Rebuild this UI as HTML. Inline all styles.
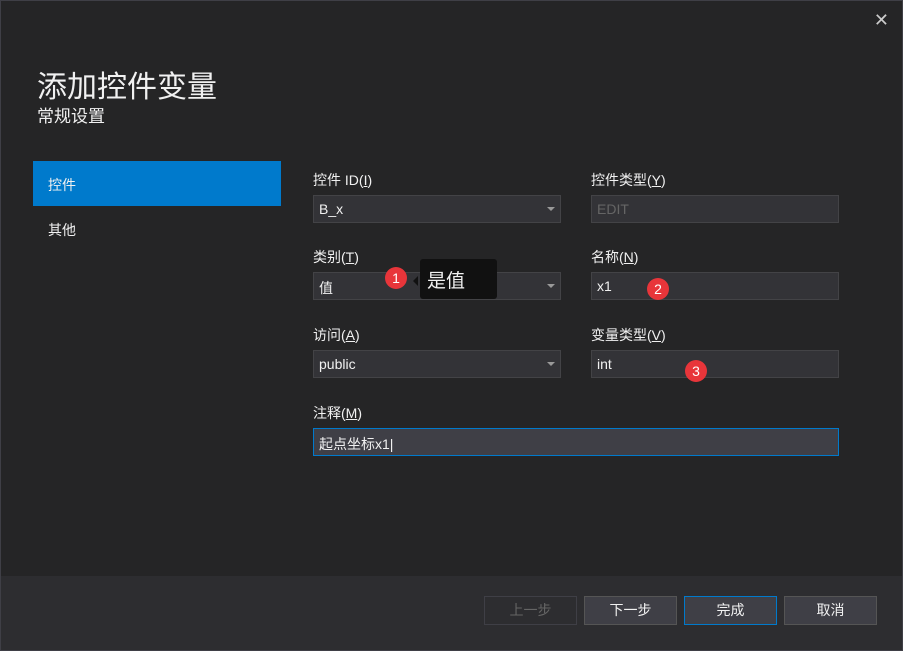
<!DOCTYPE html>
<html><head><meta charset="utf-8"><style>
*{margin:0;padding:0;box-sizing:border-box}
body{width:903px;height:651px;background:#252526;font-family:"Liberation Sans","Microsoft YaHei","Noto Sans CJK SC",sans-serif;color:#f1f1f1;position:relative;overflow:hidden}
.frame{position:absolute;left:0;top:0;width:903px;height:651px;border:1px solid #3f3f46}
.a{position:absolute}
.t1{left:37px;top:62px;font-size:30px;color:#f1f1f1}
.t2{left:37px;top:102px;font-size:17px}
.nav{left:33px;top:161px;width:248px;height:45px;background:#007acc;font-size:14px;padding:14px 0 0 15px}
.nav2{left:48px;top:220px;font-size:14px}
.lbl{font-size:14px;color:#f1f1f1}
.in{background:#333337;border:1px solid #434346;height:28px;font-size:14px;padding:5px 0 0 5px;color:#f1f1f1}
.dd::after{content:"";position:absolute;right:5px;top:11px;border:4px solid transparent;border-top:4px solid #999;border-bottom:0}
.dis{color:#656565}
.badge{width:22px;height:22px;border-radius:50%;background:#e8353a;color:#fff;font-size:14px;text-align:center;line-height:22px}
.foot{left:1px;top:576px;width:901px;height:74px;background:#2d2d30}
.btn{top:596px;width:93px;height:29px;background:#3f3f46;border:1px solid #555;font-size:14px;text-align:center;line-height:27px}
</style></head><body>
<div class="frame"></div>
<div class="a" style="right:14px;top:10px;font-size:18px;color:#ccc">✕</div>
<div class="a t1">添加控件变量</div>
<div class="a t2">常规设置</div>
<div class="a nav">控件</div>
<div class="a nav2">其他</div>

<div class="a lbl" style="left:313px;top:170px">控件 ID(<u>I</u>)</div>
<div class="a in dd" style="left:313px;top:195px;width:248px">B_x</div>
<div class="a lbl" style="left:591px;top:170px">控件类型(<u>Y</u>)</div>
<div class="a in dis" style="left:591px;top:195px;width:248px">EDIT</div>

<div class="a lbl" style="left:313px;top:247px">类别(<u>T</u>)</div>
<div class="a in dd" style="left:313px;top:272px;width:248px">值</div>
<div class="a lbl" style="left:591px;top:247px">名称(<u>N</u>)</div>
<div class="a in" style="left:591px;top:272px;width:248px">x1</div>

<div class="a lbl" style="left:313px;top:325px">访问(<u>A</u>)</div>
<div class="a in dd" style="left:313px;top:350px;width:248px">public</div>
<div class="a lbl" style="left:591px;top:325px">变量类型(<u>V</u>)</div>
<div class="a in" style="left:591px;top:350px;width:248px">int</div>

<div class="a lbl" style="left:313px;top:403px">注释(<u>M</u>)</div>
<div class="a in" style="left:313px;top:428px;width:526px;border-color:#007acc;background:#3f3f46">起点坐标x1|</div>

<div class="a" style="left:420px;top:259px;width:77px;height:40px;background:#111;border-radius:3px;font-size:19px;padding:7px 0 0 7px">是值</div>
<div class="a" style="left:413px;top:276px;border:5px solid transparent;border-right:5px solid #111;border-left:0"></div>
<div class="a badge" style="left:385px;top:267px">1</div>
<div class="a badge" style="left:647px;top:278px">2</div>
<div class="a badge" style="left:685px;top:360px">3</div>

<div class="a foot"></div>
<div class="a btn" style="left:484px;background:#2d2d30;border-color:#3f3f46;color:#656565">上一步</div>
<div class="a btn" style="left:584px">下一步</div>
<div class="a btn" style="left:684px;border-color:#007acc">完成</div>
<div class="a btn" style="left:784px">取消</div>
</body></html>
